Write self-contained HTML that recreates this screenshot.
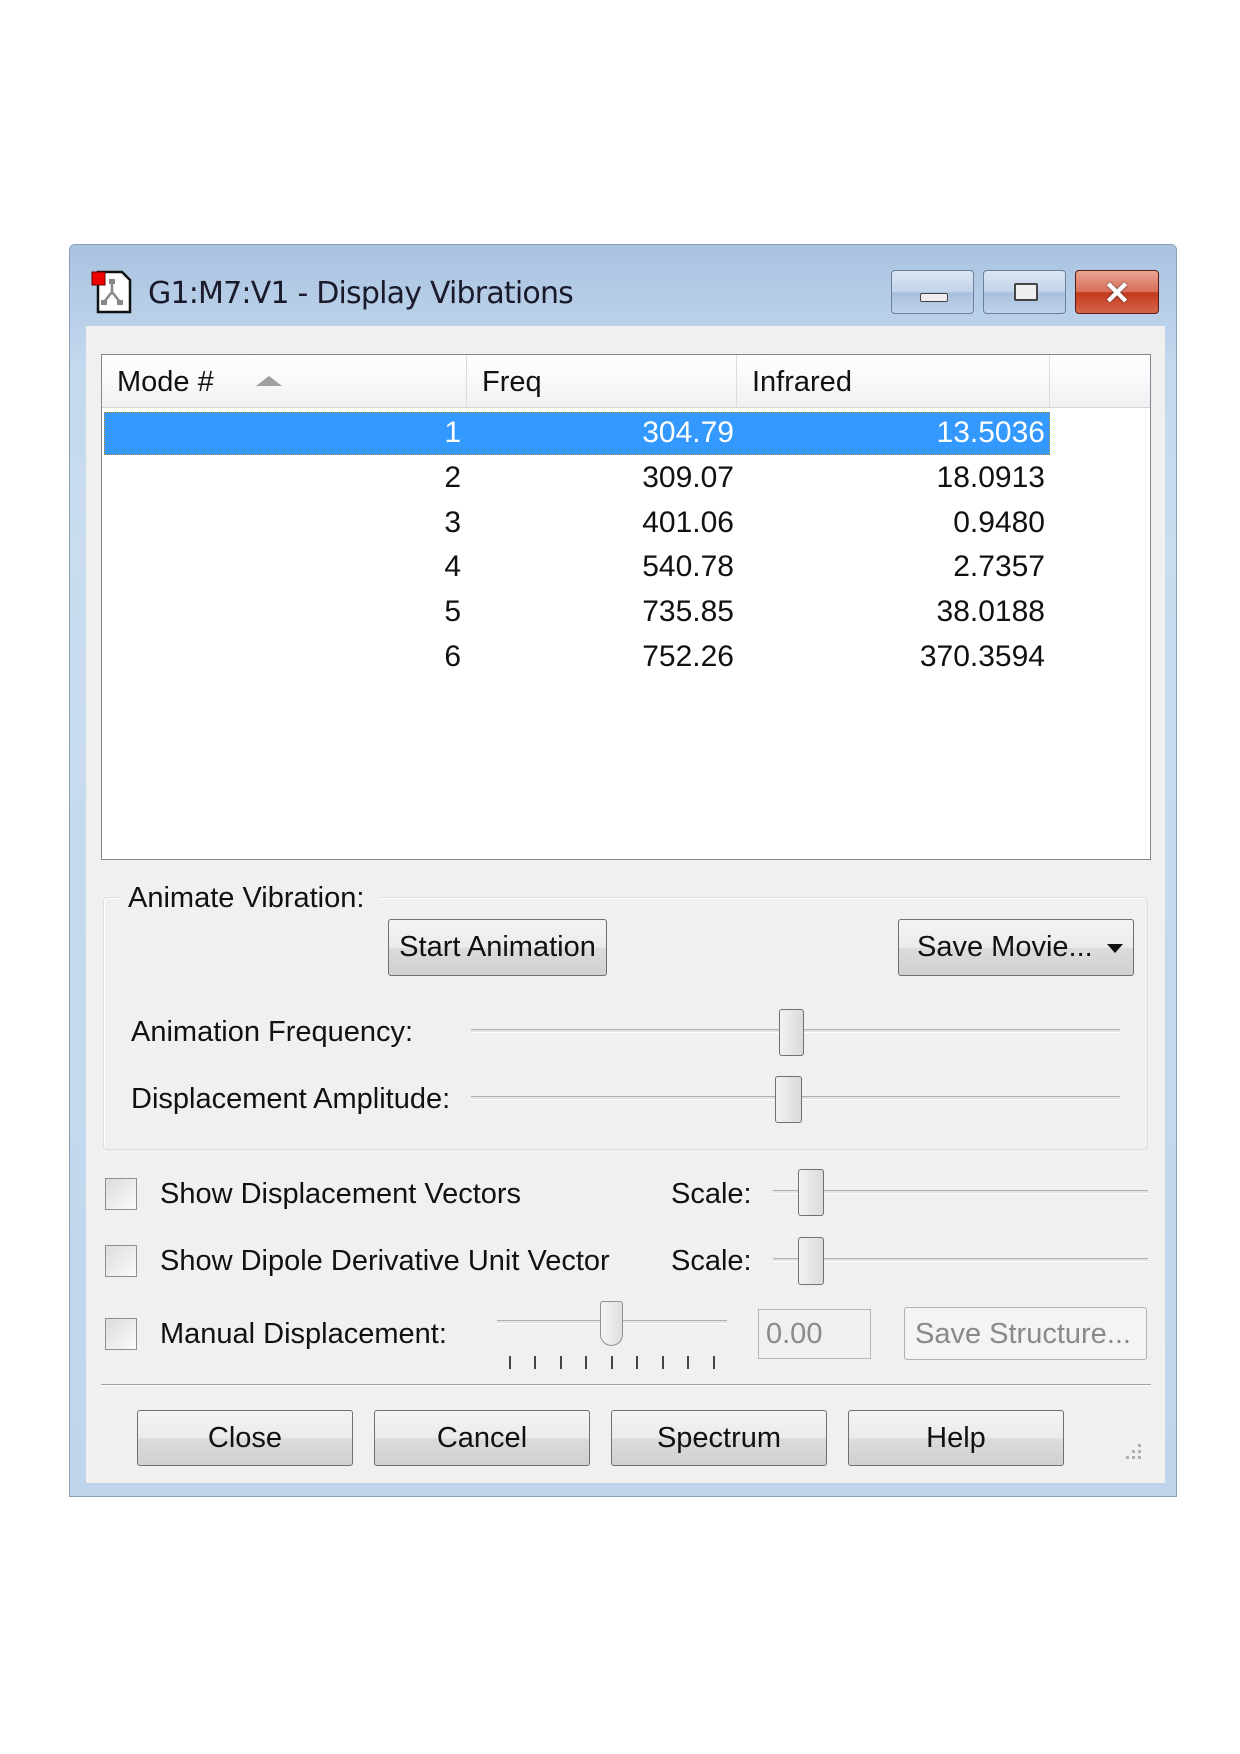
<!DOCTYPE html>
<html><head><meta charset="utf-8"><style>
*{box-sizing:border-box;margin:0;padding:0}
body{width:1240px;height:1754px;background:#fff;position:relative;font-family:"Liberation Sans",sans-serif;color:#111;overflow:hidden}
.a{position:absolute}
.win{left:69px;top:244px;width:1108px;height:1253px;background:linear-gradient(#a9c3e0,#c4d8ee 120px,#c9dcf0 300px,#c0d5ec);border:1px solid #8a9fb8;border-radius:6px 6px 0 0}
.client{left:86px;top:326px;width:1079px;height:1157px;background:#f0f0f0}
.tb{border:1px solid #6e7f98;border-radius:4px;background:linear-gradient(#dbe6f3,#c3d4ea 50%,#a9bfdc 51%,#bed2ea)}
.btn{position:absolute;border:1px solid #707070;border-radius:3px;background:linear-gradient(#f4f4f4,#ebebeb 50%,#dcdcdc 51%,#d0d0d0);font-size:29px;text-align:center;color:#111}
.t{position:absolute;font-size:29px;white-space:nowrap;line-height:1}
.num{position:absolute;font-size:30px;line-height:1;text-align:right}
.cb{position:absolute;width:32px;height:32px;border:1px solid #8e8f8f;background:linear-gradient(135deg,#dcdcdc,#fbfbfb)}
.track{position:absolute;height:4px;border-top:1px solid #b0b0b0;border-bottom:1px solid #fff;background:#e2e2e2}
.thumb{position:absolute;border:1px solid #707070;border-radius:3px;background:linear-gradient(90deg,#f2f2f2,#dadada)}
</style></head><body>
<div class="a win"></div>
<svg class="a" style="left:90px;top:270px" width="44" height="44" viewBox="0 0 44 44">
<path d="M8 2h24l8 8v32H8z" fill="#fff" stroke="#111" stroke-width="2.5"/>
<rect x="2" y="2" width="13" height="13" fill="#e00" stroke="#600"/>
<path d="M22 12v10M22 22l-8 10M22 22l8 10" stroke="#888" stroke-width="2.5"/>
<rect x="19" y="9" width="6" height="5" fill="#888"/><rect x="11" y="30" width="6" height="5" fill="#888"/><rect x="27" y="30" width="6" height="5" fill="#888"/>
</svg>
<div class="t" style="left:148px;top:279px;font-size:30px;font-family:'DejaVu Sans','Liberation Sans',sans-serif;color:#1a1a2a;letter-spacing:-0.8px">G1:M7:V1 - Display Vibrations</div>
<div class="a tb" style="left:891px;top:270px;width:83px;height:44px"><div class="a" style="left:28px;top:22px;width:28px;height:9px;border:1px solid #444;background:#eee;border-radius:2px"></div></div>
<div class="a tb" style="left:983px;top:270px;width:83px;height:44px"><div class="a" style="left:30px;top:12px;width:24px;height:18px;border:2px solid #444;background:#eee;border-radius:2px"></div></div>
<div class="a" style="left:1075px;top:270px;width:84px;height:44px;border:1px solid #5a1a14;border-radius:4px;background:linear-gradient(#e8a492,#d86d58 50%,#c3391c 51%,#d6644a)"><div class="a" style="left:0;top:3px;width:82px;text-align:center;color:#fff;font-size:32px;font-weight:bold;text-shadow:0 0 2px #333">✕</div></div>
<div class="a client"></div>
<div class="a" style="left:101px;top:354px;width:1050px;height:506px;background:#fff;border:1px solid #828790"></div>
<div class="a" style="left:102px;top:355px;width:1048px;height:53px;background:linear-gradient(#fff,#f7f8fa 50%,#f0f1f3);border-bottom:1px solid #d5d5d5"></div>
<div class="a" style="left:466px;top:355px;width:1px;height:53px;background:#dcdcdc"></div>
<div class="a" style="left:736px;top:355px;width:1px;height:53px;background:#dcdcdc"></div>
<div class="a" style="left:1049px;top:355px;width:1px;height:53px;background:#dcdcdc"></div>
<div class="t" style="left:117px;top:368px">Mode #</div>
<div class="a" style="left:256px;top:376px;width:0;height:0;border-left:13px solid transparent;border-right:13px solid transparent;border-bottom:10px solid #a0a0a0"></div>
<div class="t" style="left:482px;top:368px">Freq</div>
<div class="t" style="left:752px;top:368px">Infrared</div>
<div class="a" style="left:104px;top:412px;width:946px;height:43px;background:#3399ff;border:1px dotted #c08a40"></div>
<div class="num" style="left:300px;top:418px;width:161px;color:#fff">1</div>
<div class="num" style="left:560px;top:418px;width:174px;color:#fff">304.79</div>
<div class="num" style="left:850px;top:418px;width:195px;color:#fff">13.5036</div>
<div class="num" style="left:300px;top:463px;width:161px">2</div><div class="num" style="left:560px;top:463px;width:174px">309.07</div><div class="num" style="left:850px;top:463px;width:195px">18.0913</div>
<div class="num" style="left:300px;top:508px;width:161px">3</div><div class="num" style="left:560px;top:508px;width:174px">401.06</div><div class="num" style="left:850px;top:508px;width:195px">0.9480</div>
<div class="num" style="left:300px;top:552px;width:161px">4</div><div class="num" style="left:560px;top:552px;width:174px">540.78</div><div class="num" style="left:850px;top:552px;width:195px">2.7357</div>
<div class="num" style="left:300px;top:597px;width:161px">5</div><div class="num" style="left:560px;top:597px;width:174px">735.85</div><div class="num" style="left:850px;top:597px;width:195px">38.0188</div>
<div class="num" style="left:300px;top:642px;width:161px">6</div><div class="num" style="left:560px;top:642px;width:174px">752.26</div><div class="num" style="left:850px;top:642px;width:195px">370.3594</div>
<div class="a" style="left:103px;top:897px;width:1045px;height:253px;border:1px solid #dcdcdc;border-radius:4px;box-shadow:inset 1px 1px 0 #fff"></div>
<div class="a" style="left:118px;top:880px;width:262px;height:36px;background:#f0f0f0"></div>
<div class="t" style="left:128px;top:884px">Animate Vibration:</div>
<div class="btn" style="left:388px;top:919px;width:219px;height:57px;line-height:54px">Start Animation</div>
<div class="btn" style="left:898px;top:919px;width:236px;height:57px;line-height:54px;text-align:left;padding-left:18px">Save Movie...<span style="position:absolute;right:10px;top:24px;border-left:8px solid transparent;border-right:8px solid transparent;border-top:9px solid #111"></span></div>
<div class="t" style="left:131px;top:1018px">Animation Frequency:</div>
<div class="track" style="left:471px;top:1029px;width:649px"></div>
<div class="thumb" style="left:779px;top:1009px;width:25px;height:47px"></div>
<div class="t" style="left:131px;top:1085px">Displacement Amplitude:</div>
<div class="track" style="left:471px;top:1096px;width:649px"></div>
<div class="thumb" style="left:775px;top:1076px;width:27px;height:47px"></div>
<div class="cb" style="left:105px;top:1178px"></div>
<div class="t" style="left:160px;top:1180px">Show Displacement Vectors</div>
<div class="t" style="left:671px;top:1180px">Scale:</div>
<div class="track" style="left:773px;top:1190px;width:375px"></div>
<div class="thumb" style="left:798px;top:1169px;width:26px;height:47px"></div>
<div class="cb" style="left:105px;top:1245px"></div>
<div class="t" style="left:160px;top:1247px">Show Dipole Derivative Unit Vector</div>
<div class="t" style="left:671px;top:1247px">Scale:</div>
<div class="track" style="left:773px;top:1258px;width:375px"></div>
<div class="thumb" style="left:798px;top:1237px;width:26px;height:48px"></div>
<div class="cb" style="left:105px;top:1318px"></div>
<div class="t" style="left:160px;top:1320px">Manual Displacement:</div>
<div class="track" style="left:497px;top:1320px;width:230px"></div>
<div class="a" style="left:600px;top:1301px;width:23px;height:45px;border:1px solid #909090;border-radius:3px 3px 12px 12px;background:linear-gradient(90deg,#f4f4f4,#dedede)"></div>
<svg class="a" style="left:505px;top:1354px" width="220" height="18"><g stroke="#444" stroke-width="2">
<path d="M5 2v13M30 2v13M56 2v13M81 2v13M107 2v13M132 2v13M158 2v13M183 2v13M209 2v13"/></g></svg>
<div class="a" style="left:758px;top:1309px;width:113px;height:50px;border:1px solid #b5b5b5;background:#f0f0f0"></div>
<div class="t" style="left:766px;top:1320px;color:#8a8a8a">0.00</div>
<div class="a" style="left:904px;top:1307px;width:243px;height:53px;border:1px solid #adb2b5;border-radius:3px;background:#f4f4f4"></div>
<div class="t" style="left:915px;top:1320px;color:#8a8a8a">Save Structure...</div>
<div class="a" style="left:101px;top:1384px;width:1050px;height:2px;border-top:1px solid #a0a0a0;border-bottom:1px solid #fff"></div>
<div class="btn" style="left:137px;top:1410px;width:216px;height:56px;line-height:54px">Close</div>
<div class="btn" style="left:374px;top:1410px;width:216px;height:56px;line-height:54px">Cancel</div>
<div class="btn" style="left:611px;top:1410px;width:216px;height:56px;line-height:54px">Spectrum</div>
<div class="btn" style="left:848px;top:1410px;width:216px;height:56px;line-height:54px">Help</div>
<svg class="a" style="left:1120px;top:1440px" width="24" height="24"><g fill="#b0b0b0"><rect x="18" y="4" width="3" height="3"/><rect x="12" y="10" width="3" height="3"/><rect x="18" y="10" width="3" height="3"/><rect x="6" y="16" width="3" height="3"/><rect x="12" y="16" width="3" height="3"/><rect x="18" y="16" width="3" height="3"/></g></svg>
</body></html>
